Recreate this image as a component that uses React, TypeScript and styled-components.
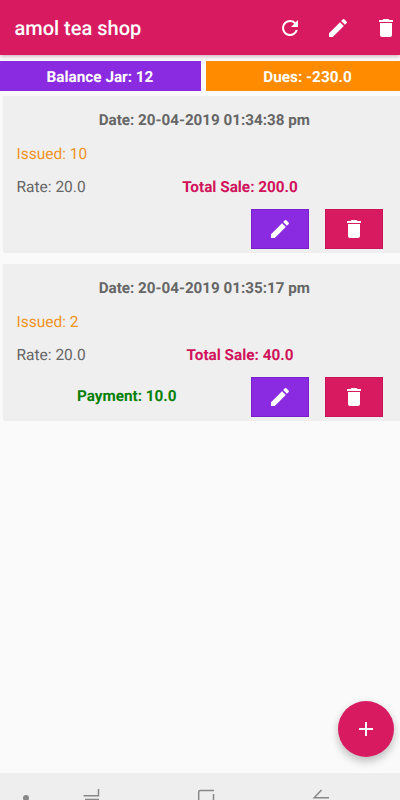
import React from "react";
import styled, { createGlobalStyle } from "styled-components";

const GlobalStyle = createGlobalStyle`
  * { box-sizing: border-box; }
  html, body { margin: 0; padding: 0; overflow: hidden; }
  body {
    background: #fafafa;
    font-family: Roboto, sans-serif;
    text-rendering: geometricPrecision;
  }
  button { font: inherit; border: 0; padding: 0; margin: 0; color: inherit; background: none; }
`;

const Screen = styled.div`
  position: relative;
  display: flex;
  flex-direction: column;
  width: 400px;
  height: 800px;
  overflow: hidden;
  background: #fafafa;
`;

const AppBar = styled.header`
  position: relative;
  display: flex;
  flex: none;
  align-items: center;
  height: 55px;
  padding-left: 14.5px;
  color: #fff;
  background: #d81b60;
  box-shadow: 0 1px 4px rgba(120, 0, 50, 0.35);
`;

const Title = styled.h1`
  flex: 1;
  margin: 0;
  padding-top: 1px;
  font-size: 20px;
  font-weight: 500;
  line-height: 24px;
  white-space: nowrap;
`;

const Actions = styled.div`
  display: flex;
  flex: none;
  gap: 24px;
  margin-right: 2px;
`;

const IconButton = styled.button`
  display: flex;
  width: 24px;
  height: 24px;
`;

const Icon = styled.svg`
  display: block;
  flex: none;
  width: 24px;
  height: 24px;
  fill: currentColor;
`;

const Summary = styled.div`
  display: grid;
  flex: none;
  grid-template-columns: 201px 204px;
  gap: 5px;
  height: 30px;
  margin-top: 6px;
`;

const SummaryCell = styled.div<{ $color: string }>`
  display: flex;
  align-items: center;
  justify-content: center;
  padding: 1px 1px 0 0;
  color: #fff;
  background: ${(p) => p.$color};
  font-size: 15.3px;
  font-weight: 700;
`;

const List = styled.main`
  display: flex;
  flex: 1;
  flex-direction: column;
  gap: 11px;
  padding: 5px 0 0 3px;
`;

const Card = styled.article`
  display: flex;
  flex-direction: column;
  height: 157px;
  padding: 8px 17px 4.5px 13.5px;
  color: #666;
  background: #efefef;
  font-size: 15.5px;
  line-height: 33px;
  white-space: nowrap;
`;

const DateLine = styled.div`
  height: 33px;
  padding-left: 9px;
  font-size: 15.2px;
  font-weight: 700;
  text-align: center;
`;

const Issued = styled.div`
  height: 34px;
  padding-top: 1px;
  color: #f0931f;
`;

const Figures = styled.div`
  display: grid;
  grid-template-columns: 115px 217px;
  height: 32px;
`;

const Total = styled.div`
  color: #d0125b;
  font-size: 15.3px;
  font-weight: 700;
  text-align: center;
`;

const Footer = styled.div`
  display: grid;
  grid-template-columns: 1fr 58px 58px;
  gap: 16px;
  height: 40px;
  margin-top: 5.5px;
`;

const Payment = styled.div`
  padding-left: 2px;
  color: #078007;
  font-size: 15.3px;
  font-weight: 700;
  line-height: 38px;
  text-align: center;
`;

const CardButton = styled.button<{ $color: string; $edge: string }>`
  display: flex;
  align-items: center;
  justify-content: center;
  color: #fff;
  background: ${(p) => p.$color};
  box-shadow: inset 0 0 0 1px ${(p) => p.$edge};
`;

const AddButton = styled.button`
  position: absolute;
  right: 6.5px;
  bottom: 43px;
  display: flex;
  align-items: center;
  justify-content: center;
  width: 56px;
  height: 56px;
  border-radius: 50%;
  color: #fff;
  background: #d81b60;
  box-shadow: 0 5px 8px rgba(0, 0, 0, 0.2), 0 1px 9px rgba(0, 0, 0, 0.07);
`;

const NavBar = styled.nav`
  flex: none;
  height: 27px;
  overflow: hidden;
  background: #eee;
`;

const NavIcons = styled.svg`
  display: block;
  fill: none;
  stroke: #888;
  stroke-width: 1.5;
`;

const paths = {
  refresh:
    "M17.65 6.35A7.96 7.96 0 0 0 12 4a8 8 0 1 0 7.73 10h-2.08A6 6 0 1 1 12 6c1.66 0 3.14.69 4.22 1.78L13 11h7V4l-2.35 2.35z",
  edit:
    "M3 17.25V21h3.75L17.81 9.94l-3.75-3.75L3 17.25zM20.71 7.04a1 1 0 0 0 0-1.41l-2.34-2.34a1 1 0 0 0-1.41 0l-1.83 1.83 3.75 3.75 1.83-1.83z",
  trash:
    "M6 19c0 1.1.9 2 2 2h8c1.1 0 2-.9 2-2V7H6v12zM19 4h-3.5l-1-1h-5l-1 1H5v2h14V4z",
  add: "M19 13h-6v6h-2v-6H5v-2h6V5h2v6h6v2z",
};

const Glyph = ({ name }: { name: keyof typeof paths }) => (
  <Icon viewBox="0 0 24 24" aria-hidden="true">
    <path d={paths[name]} />
  </Icon>
);

interface Entry {
  date: string;
  issued: number;
  rate: string;
  total: string;
  payment?: string;
}

const entries: Entry[] = [
  { date: "20-04-2019 01:34:38 pm", issued: 10, rate: "20.0", total: "200.0" },
  { date: "20-04-2019 01:35:17 pm", issued: 2, rate: "20.0", total: "40.0", payment: "10.0" },
];

export default function App() {
  return (
    <>
      <GlobalStyle />
      <Screen>
        <AppBar>
          <Title>amol tea shop</Title>
          <Actions>
            <IconButton aria-label="Refresh"><Glyph name="refresh" /></IconButton>
            <IconButton aria-label="Edit shop"><Glyph name="edit" /></IconButton>
            <IconButton aria-label="Delete shop"><Glyph name="trash" /></IconButton>
          </Actions>
        </AppBar>
        <Summary>
          <SummaryCell $color="#8a2be2">Balance Jar: 12</SummaryCell>
          <SummaryCell $color="#ff8c00">Dues: -230.0</SummaryCell>
        </Summary>
        <List>
          {entries.map((e) => (
            <Card key={e.date}>
              <DateLine>Date: {e.date}</DateLine>
              <Issued>Issued: {e.issued}</Issued>
              <Figures>
                <div>Rate: {e.rate}</div>
                <Total>Total Sale: {e.total}</Total>
              </Figures>
              <Footer>
                <Payment>{e.payment && `Payment: ${e.payment}`}</Payment>
                <CardButton $color="#8a2be2" $edge="#7a22c8" aria-label="Edit entry">
                  <Glyph name="edit" />
                </CardButton>
                <CardButton $color="#d81b60" $edge="#cb1558" aria-label="Delete entry">
                  <Glyph name="trash" />
                </CardButton>
              </Footer>
            </Card>
          ))}
        </List>
        <NavBar>
          <NavIcons width="400" height="27" viewBox="0 0 400 27">
            <circle cx="26" cy="25" r="3" fill="#888" stroke="none" />
            <path d="M98.5 16v6.7H83.5M85 26.5h14" />
            <path d="M198.7 30V19q0-1.5 1.5-1.5H214M213.5 21v9" />
            <path d="M321.5 17l-7.3 7.8H329" />
          </NavIcons>
        </NavBar>
        <AddButton aria-label="Add entry"><Glyph name="add" /></AddButton>
      </Screen>
    </>
  );
}
